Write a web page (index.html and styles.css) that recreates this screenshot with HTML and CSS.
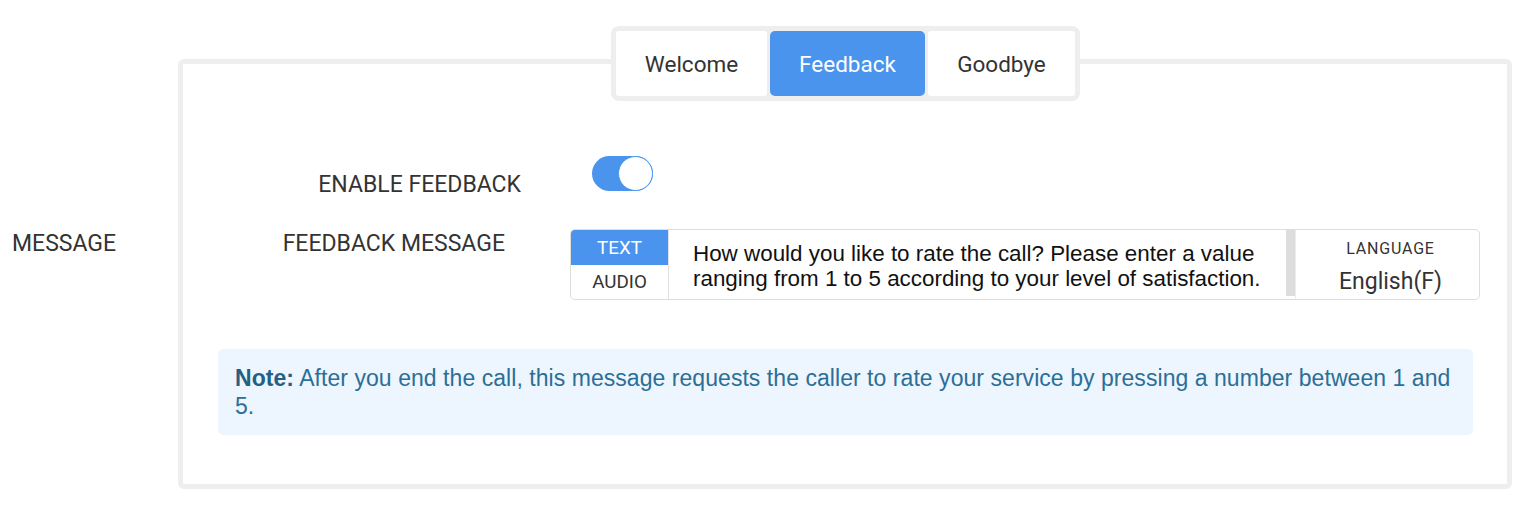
FILE: index.html
```
<!DOCTYPE html>
<html>
<head>
<meta charset="utf-8">
<link rel="stylesheet" href="styles.css">
</head>
<body>
<div class="page">
  <div class="side-label">MESSAGE</div>
  <div class="panel">
    <div class="tabs">
      <div class="tab tab-welcome">Welcome</div>
      <div class="tab tab-feedback active">Feedback</div>
      <div class="tab tab-goodbye">Goodbye</div>
    </div>
    <div class="row row-enable">
      <div class="label label-enable">ENABLE FEEDBACK</div>
      <div class="toggle"><span class="knob"></span></div>
    </div>
    <div class="row row-message">
      <div class="label label-message">FEEDBACK MESSAGE</div>
      <div class="field">
        <div class="types">
          <div class="type active">TEXT</div>
          <div class="type">AUDIO</div>
        </div>
        <div class="content">How would you like to rate the call? Please enter a value ranging from 1 to 5 according to your level of satisfaction.</div>
        <div class="scroll"></div>
        <div class="lang">
          <div class="lang-title">LANGUAGE</div>
          <div class="lang-value">English(F)</div>
        </div>
      </div>
    </div>
    <div class="note"><b>Note:</b> After you end the call, this message requests the caller to rate your service by pressing a number between 1 and 5.</div>
  </div>
</div>
</body>
</html>
```
FILE: styles.css
```
html, body {
  margin: 0;
  padding: 0;
  background: #ffffff;
}
body {
  font-family: Roboto, "Liberation Sans", Arial, sans-serif;
  color: #333333;
}
.page {
  display: flex;
  align-items: flex-start;
}
.side-label {
  width: 178px;
  flex-shrink: 0;
  box-sizing: border-box;
  padding-left: 12px;
  padding-top: 232px;
  font-size: 23px;
  line-height: 23px;
  color: #333;
}
.panel {
  box-sizing: border-box;
  width: 1334px;
  height: 430px;
  margin-top: 59px;
  border: 5px solid #eeeeee;
  border-radius: 6px;
  padding: 0 34px 0 35px;
  display: flex;
  flex-direction: column;
}
.tabs {
  align-self: center;
  margin-top: -38px;
  display: flex;
  gap: 3px;
  padding: 5px;
  background: #eeeeee;
  border-radius: 8px;
}
.tab {
  height: 65px;
  display: flex;
  align-items: center;
  justify-content: center;
  background: #ffffff;
  border-radius: 3px;
  font-size: 22.5px;
  color: #333;
}
.tab-welcome { width: 151px; }
.tab-feedback { width: 155px; }
.tab-goodbye { width: 147px; }
.tab.active {
  background: #4a94ee;
  color: #ffffff;
  border-radius: 5px;
}
.row {
  display: flex;
  align-items: flex-start;
}
.label {
  text-align: right;
  font-size: 23px;
  line-height: 23px;
  color: #333;
  flex-shrink: 0;
}
.row-enable {
  margin-top: 55px;
  height: 35px;
}
.label-enable {
  width: 303px;
  margin-top: 17px;
}
.toggle {
  margin-left: 71px;
  width: 61px;
  height: 35px;
  border-radius: 18px;
  background: #4a94ee;
  display: flex;
  justify-content: flex-end;
}
.knob {
  width: 35px;
  height: 35px;
  box-sizing: border-box;
  border-radius: 50%;
  background: #ffffff;
  border: 1px solid #4a94ee;
}
.row-message {
  margin-top: 38px;
}
.label-message {
  width: 287px;
  margin-top: 3px;
}
.field {
  margin-left: 65px;
  width: 910px;
  height: 71px;
  flex-shrink: 0;
  box-sizing: border-box;
  border: 1px solid #dddddd;
  border-radius: 5px;
  display: flex;
  overflow: hidden;
}
.types {
  width: 97px;
  flex-shrink: 0;
  border-right: 1px solid #e2e2e2;
  display: flex;
  flex-direction: column;
}
.type {
  height: 34px;
  display: flex;
  align-items: center;
  justify-content: center;
  font-size: 18.8px;
  color: #333;
}
.type.active {
  height: 35px;
  background: #4a94ee;
  color: #ffffff;
}
.content {
  flex: 1;
  padding: 11px 24px 0 24px;
  font-family: "Liberation Sans", Arial, sans-serif;
  font-size: 22.4px;
  line-height: 25px;
  color: #111111;
}
.scroll {
  width: 9px;
  height: 66px;
  flex-shrink: 0;
  background: #dddddd;
}
.lang {
  width: 184px;
  flex-shrink: 0;
  display: flex;
  flex-direction: column;
  align-items: center;
  padding-top: 11px;
  padding-left: 6px;
  box-sizing: border-box;
  border-left: 1px solid #ececec;
}
.lang-title {
  font-size: 16px;
  line-height: 16px;
  letter-spacing: 0.8px;
  color: #333;
}
.lang-value {
  margin-top: 13px;
  font-size: 23px;
  line-height: 23px;
  color: #333;
}
.note {
  margin-top: 49px;
  background: #edf5fe;
  border-radius: 5px;
  padding: 15px 17px 15px 17px;
  font-family: "Liberation Sans", Arial, sans-serif;
  font-size: 23px;
  letter-spacing: 0.05px;
  line-height: 28px;
  color: #2b6f97;
}
.note b {
  font-weight: 700;
  color: #245f84;
}
```
